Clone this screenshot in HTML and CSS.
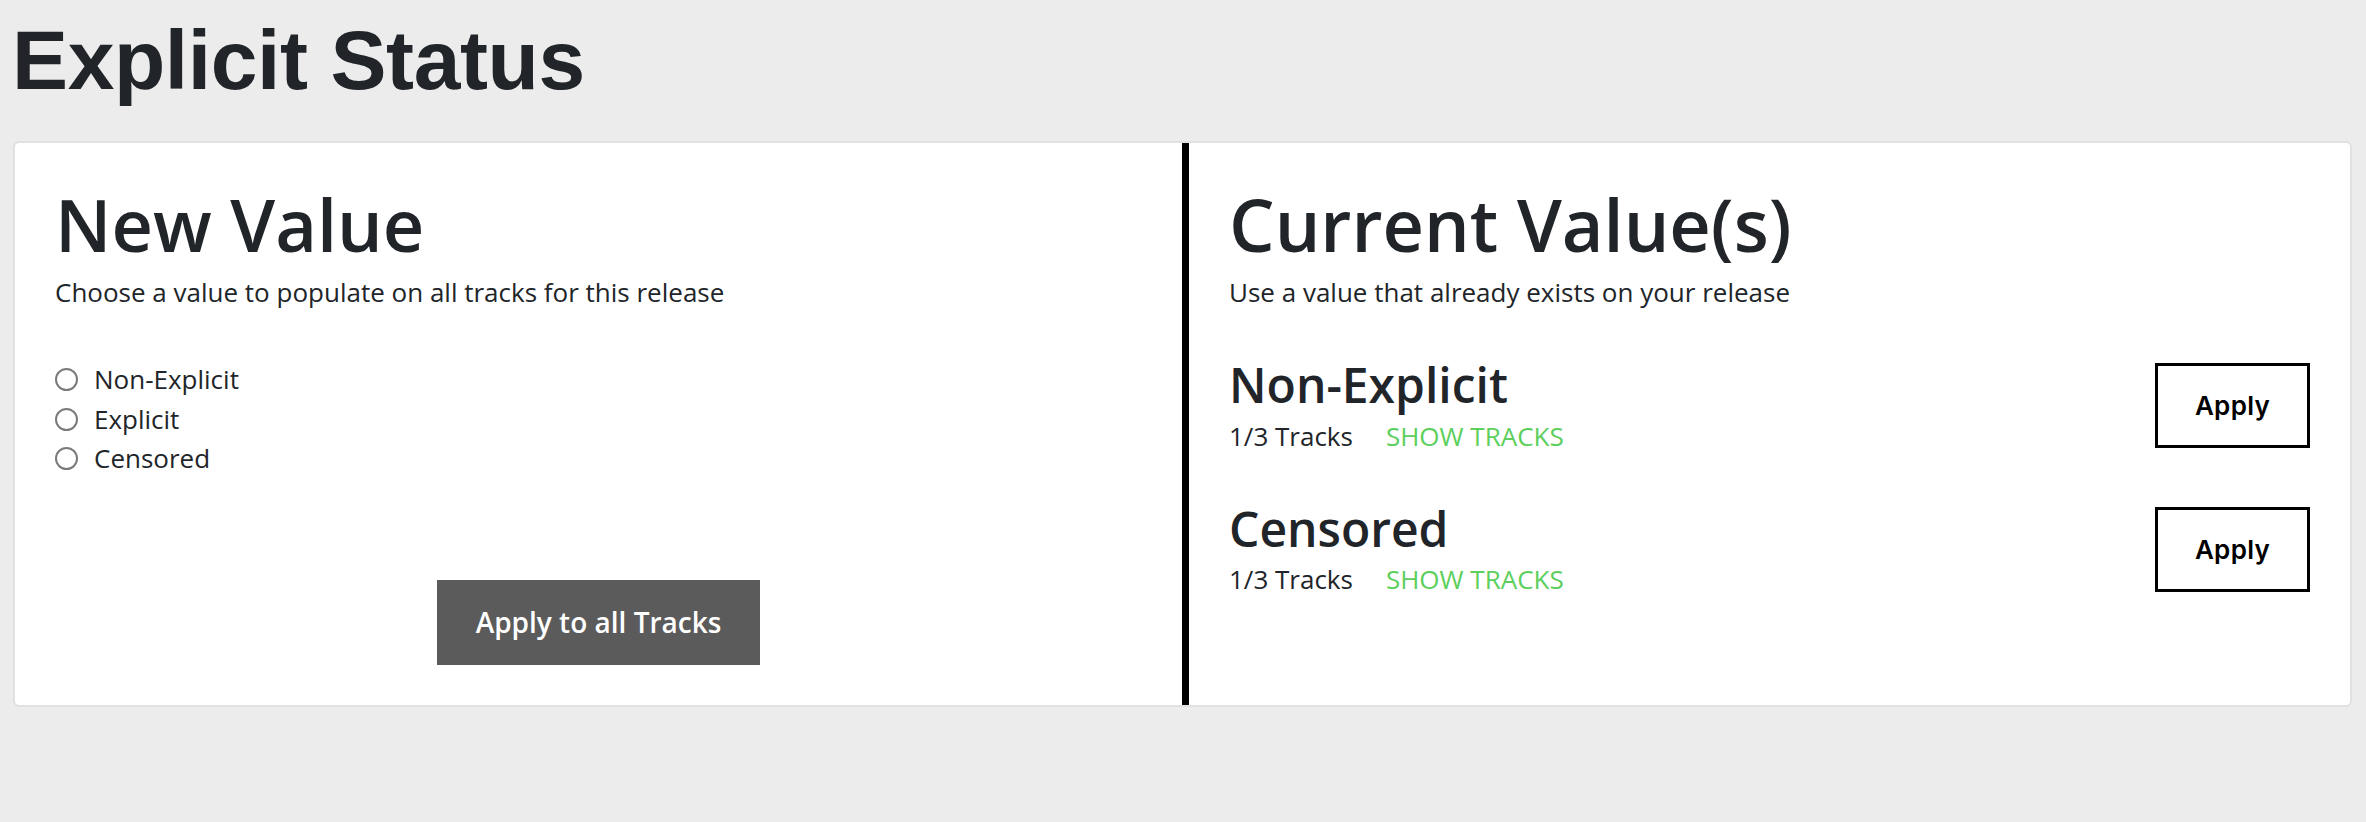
FILE: index.html
```html
<!DOCTYPE html>
<html lang="en">
<head>
<meta charset="utf-8">
<title>Explicit Status</title>
<link rel="stylesheet" href="styles.css">
</head>
<body>
<div class="page">
  <h1 class="page-title">Explicit Status</h1>
  <div class="card">
    <section class="panel panel-new">
      <h2 class="panel-title">New Value</h2>
      <p class="panel-sub">Choose a value to populate on all tracks for this release</p>
      <div class="radio-list">
        <label class="radio-row"><input type="radio" name="explicit" class="radio"><span>Non-Explicit</span></label>
        <label class="radio-row"><input type="radio" name="explicit" class="radio"><span>Explicit</span></label>
        <label class="radio-row"><input type="radio" name="explicit" class="radio"><span>Censored</span></label>
      </div>
      <button class="btn-apply-all" type="button">Apply to all Tracks</button>
    </section>
    <div class="divider"></div>
    <section class="panel panel-current">
      <h2 class="panel-title">Current Value(s)</h2>
      <p class="panel-sub">Use a value that already exists on your release</p>
      <div class="value-item">
        <div class="value-info">
          <h3 class="value-name">Non-Explicit</h3>
          <div class="value-meta"><span class="track-count">1/3 Tracks</span><a class="show-tracks" href="#">SHOW TRACKS</a></div>
        </div>
        <button class="btn-apply" type="button">Apply</button>
      </div>
      <div class="value-item">
        <div class="value-info">
          <h3 class="value-name">Censored</h3>
          <div class="value-meta"><span class="track-count">1/3 Tracks</span><a class="show-tracks" href="#">SHOW TRACKS</a></div>
        </div>
        <button class="btn-apply" type="button">Apply</button>
      </div>
    </section>
  </div>
</div>
</body>
</html>
```

FILE: styles.css
```css
html, body {
  margin: 0;
  padding: 0;
  background: #ececec;
  color: #212529;
  font-family: "Open Sans", "Noto Sans", sans-serif;
}

.page {
  padding: 10px 14px 0 13px;
}

.page-title {
  margin: 0 0 30px -1px;
  font-family: "Liberation Sans", Arial, sans-serif;
  font-weight: 700;
  font-size: 84px;
  line-height: 1.2;
  letter-spacing: -0.4px;
  color: #212529;
}

.card {
  display: grid;
  grid-template-columns: 1167px 7px 1fr;
  background: #ffffff;
  border: 2px solid #e1e1e1;
  border-radius: 6px;
}

.divider {
  background: #000000;
}

.panel {
  padding: 38px 40px 40px 40px;
  display: flex;
  flex-direction: column;
}

.panel-title {
  margin: 0 0 6px 0;
  font-size: 72px;
  font-weight: 600;
  line-height: 1.2;
  color: #212529;
}

.panel-sub {
  margin: 0;
  font-size: 26px;
  line-height: 1.5;
  color: #212529;
}

.radio-list {
  margin-top: 48px;
  display: flex;
  flex-direction: column;
}

.radio-row {
  display: flex;
  align-items: center;
  height: 39.5px;
  line-height: 39.5px;
  font-size: 26px;
  color: #212529;
}

.radio {
  appearance: none;
  -webkit-appearance: none;
  width: 23px;
  height: 23px;
  margin: 0 16px 0 0;
  border: 2px solid #7a7a7a;
  border-radius: 50%;
  background: #ffffff;
  flex: none;
}

.btn-apply-all {
  align-self: center;
  margin-top: 101px;
  height: 85px;
  padding: 0 39px;
  border: none;
  background: #5b5b5b;
  color: #ffffff;
  font-family: "Open Sans", "Noto Sans", sans-serif;
  font-weight: 600;
  font-size: 28px;
}

.value-item {
  margin-top: 44px;
  display: flex;
  align-items: center;
  justify-content: space-between;
}

.value-name {
  margin: 0 0 3px 0;
  font-size: 48px;
  font-weight: 600;
  line-height: 1.2;
  color: #212529;
}

.value-meta {
  display: flex;
  gap: 33px;
  font-size: 26px;
  line-height: 1.5;
}

.track-count {
  color: #212529;
}

.show-tracks {
  color: #5ccf5c;
  text-decoration: none;
}

.btn-apply {
  width: 155px;
  height: 85px;
  border: 3px solid #000000;
  background: #ffffff;
  color: #000000;
  font-family: Inter, "Noto Sans", sans-serif;
  font-weight: 600;
  font-size: 26px;
  letter-spacing: 0.3px;
}
```
